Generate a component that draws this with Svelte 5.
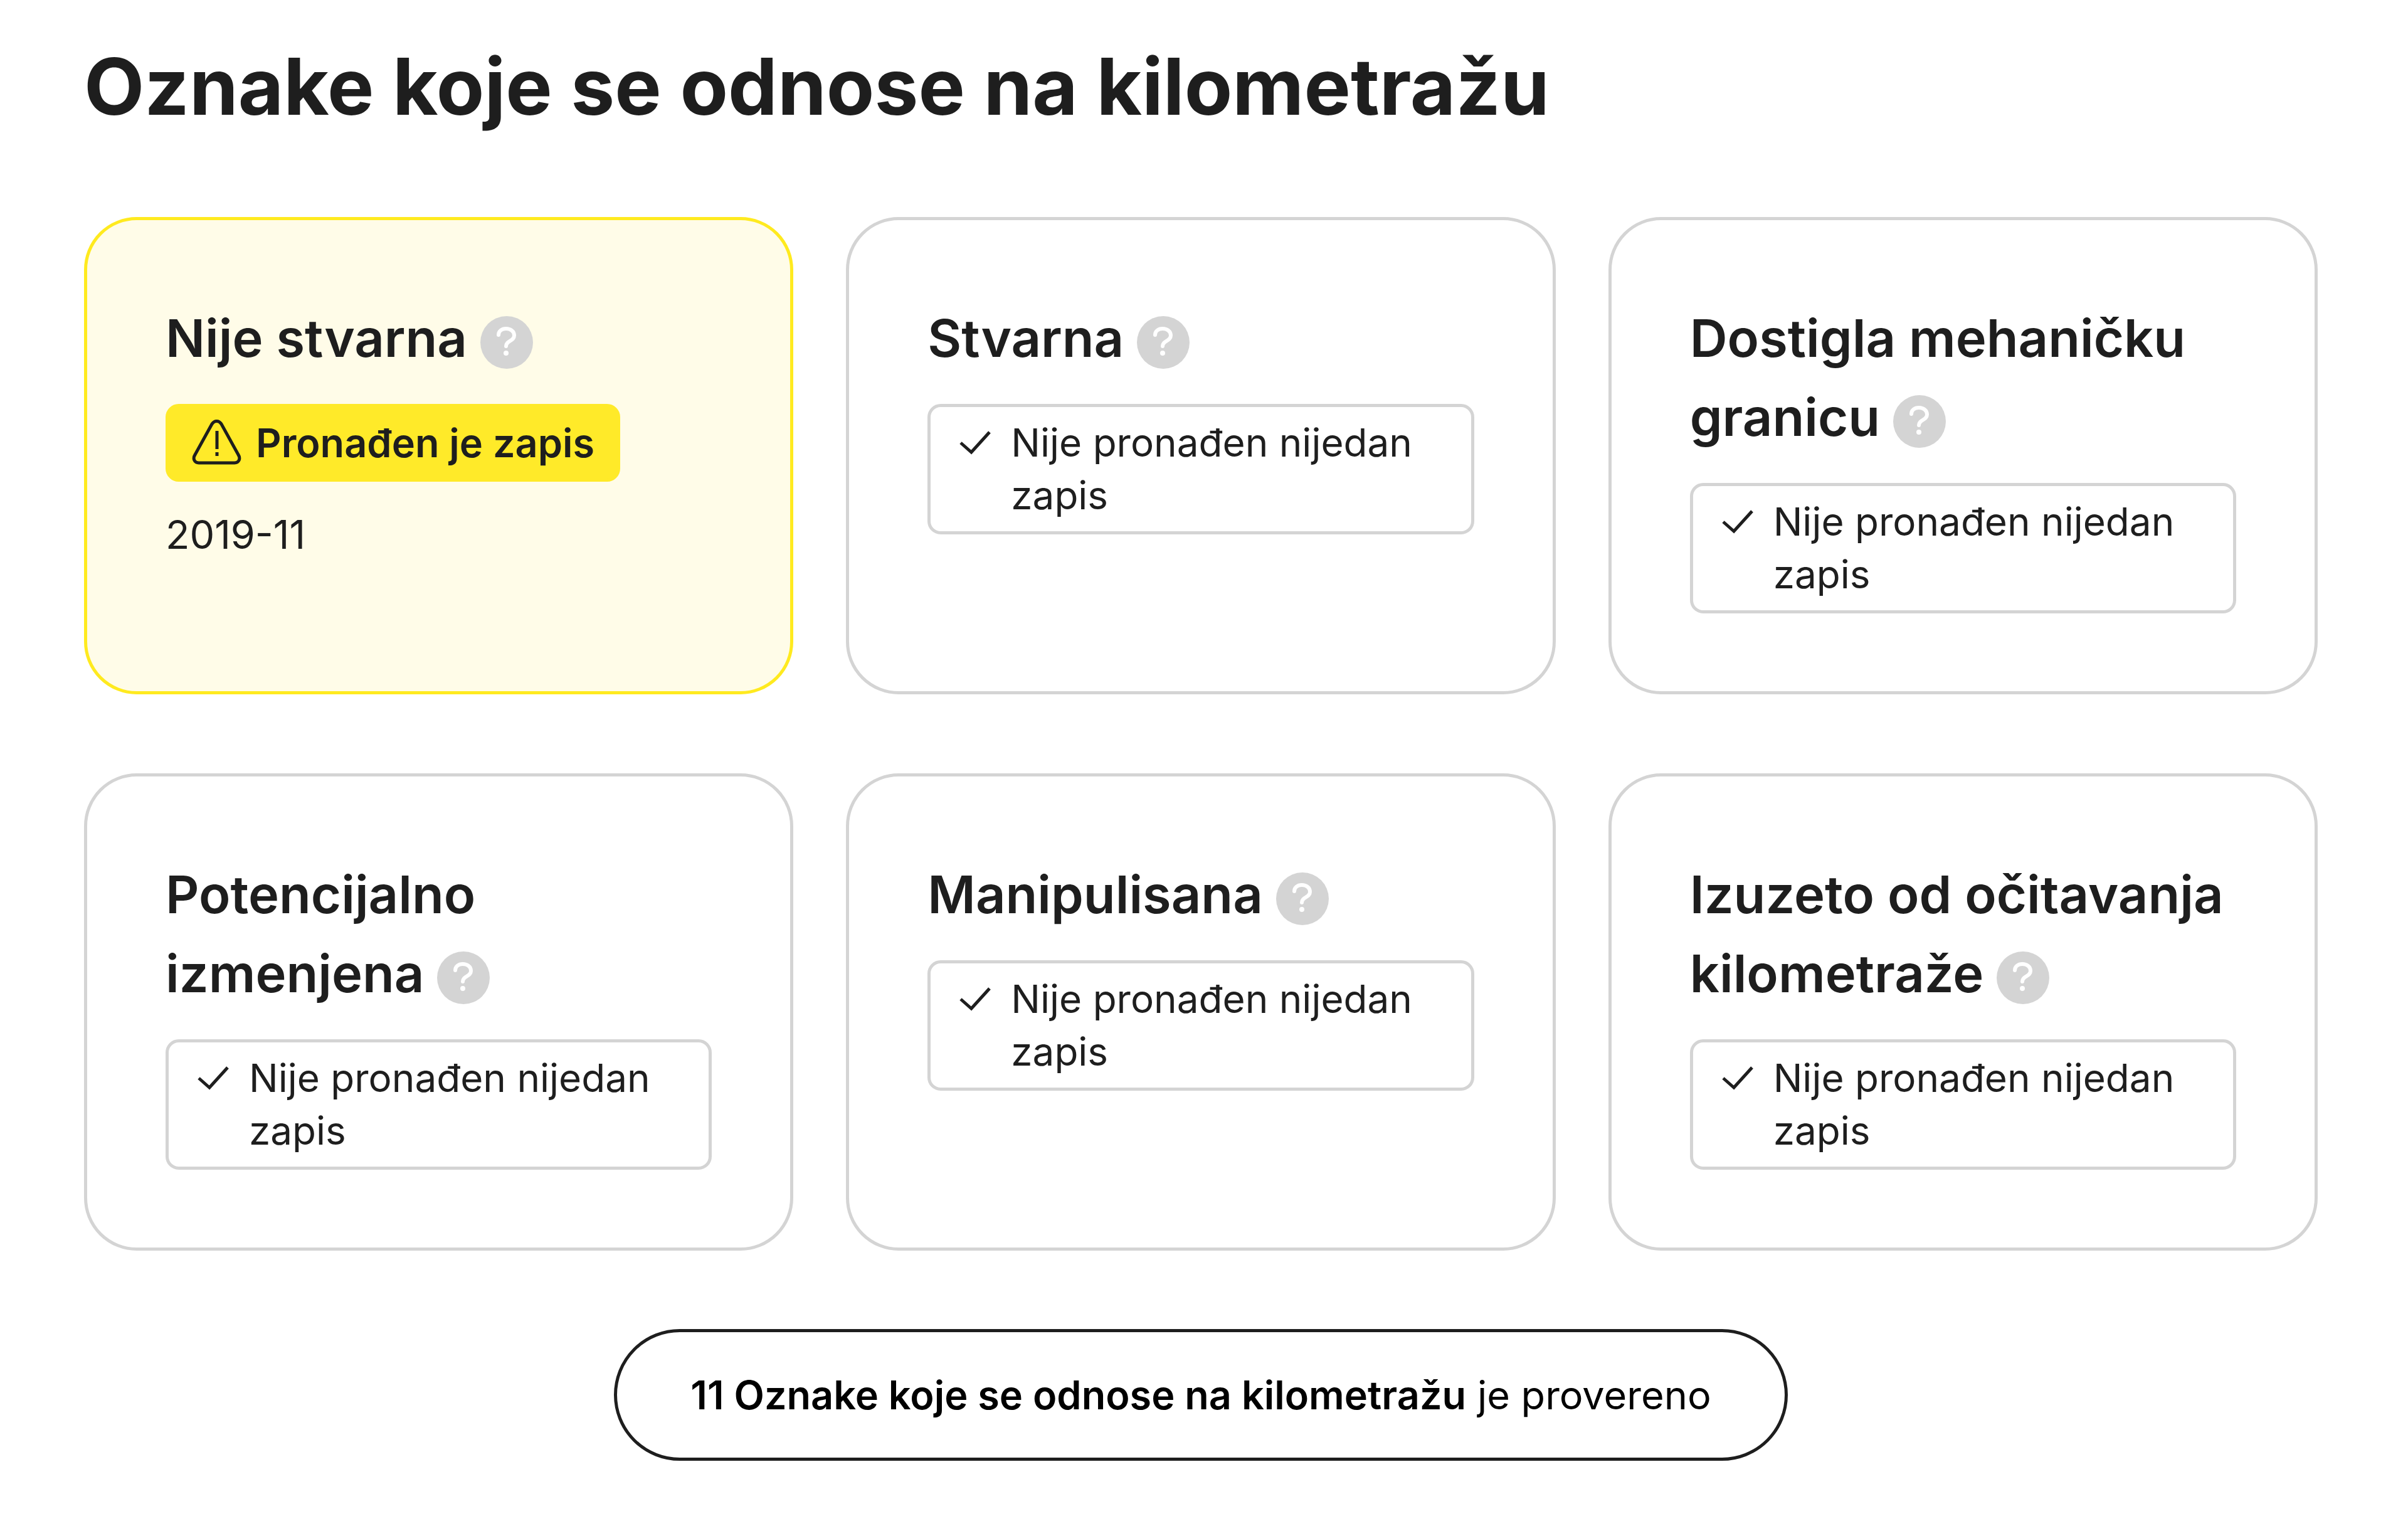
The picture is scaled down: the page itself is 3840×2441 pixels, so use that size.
<script>
  const marks = [
    { title: 'Nije stvarna', found: true, dates: ['2019-11'] },
    { title: 'Stvarna' },
    { title: 'Dostigla mehaničku granicu' },
    { title: 'Potencijalno izmenjena' },
    { title: 'Manipulisana' },
    { title: 'Izuzeto od očitavanja kilometraže' },
  ];
  const checked = 11;
</script>

<section>
  <h2>Oznake koje se odnose na kilometražu</h2>

  <div class="cards">
    {#each marks as mark}
      <article class="card" class:found={mark.found}>
        <h3>
          {mark.title}
          <button class="help" type="button" aria-label="Pomoć: {mark.title}">
            <svg viewBox="0 0 84 84" aria-hidden="true">
              <path d="M29 30C29 24 34 20 41 20C48 20 54 24 54 31C54 40 41 39 41 48" />
              <circle cx="41" cy="59" r="4" />
            </svg>
          </button>
        </h3>
        {#if mark.found}
          <div class="badge">
            <svg class="warning" viewBox="0 0 80 84" aria-hidden="true">
              <path d="M32 12L5 61C1 67 4 74 11 74H68C75 74 78 67 74 61L47 12C43 6 36 6 32 12Z" />
              <path d="M40 23V52M40 57V63" />
            </svg>
            <span>Pronađen je zapis</span>
          </div>
          {#each mark.dates as date}
            <p>{date}</p>
          {/each}
        {:else}
          <div class="badge">
            <svg class="check" viewBox="0 0 84 84" aria-hidden="true">
              <path d="M15 42L32 57L61 25" />
            </svg>
            <span>Nije pronađen nijedan zapis</span>
          </div>
        {/if}
      </article>
    {/each}
  </div>

  <div class="summary">
    <b>{checked} Oznake koje se odnose na kilometražu</b> je provereno
  </div>
</section>

<style>
  :global(body) {
    margin: 0;
    background: #fff;
  }
  section {
    display: flex;
    flex-direction: column;
    padding: 58px 144px 113px 134px;
    font-family: Inter, sans-serif;
    font-size: 63px;
    line-height: 84px;
    color: #1e1e1e;
  }
  h2 {
    margin: 0 0 128px;
    font-size: 125px;
    line-height: 160px;
    font-weight: 700;
  }
  .cards {
    display: grid;
    grid-template-columns: repeat(3, 1fr);
    gap: 126px 84px;
  }
  .card {
    padding: 125px 125px 124px;
    border: 5px solid #d4d4d4;
    border-radius: 84px;
  }
  .card.found {
    background: #fffce8;
    border-color: #ffea1f;
  }
  h3 {
    margin: 0 0 42px;
    font-size: 83px;
    line-height: 126px;
    font-weight: 600;
  }
  .help {
    width: 84px;
    height: 84px;
    padding: 0;
    border: none;
    border-radius: 50%;
    background: #d4d4d4;
    vertical-align: middle;
  }
  svg {
    display: block;
    flex: none;
    fill: none;
    stroke: currentColor;
    stroke-width: 5;
  }
  .help path {
    stroke: #fff;
    stroke-width: 6;
    stroke-linecap: round;
  }
  .help circle {
    fill: #fff;
    stroke: none;
  }
  .badge {
    display: flex;
    padding: 15px 42px 15px 33px;
    border: 5px solid #d4d4d4;
    border-radius: 21px;
    font-size: 62px;
  }
  .found .badge {
    width: fit-content;
    padding: 15px 36px 15px 37px;
    border-color: #ffea29;
    background: #ffea29;
    font-size: 63px;
    font-weight: 600;
  }
  .warning {
    width: 80px;
    height: 84px;
    margin-right: 22px;
  }
  .check {
    width: 84px;
    height: 84px;
    margin-right: 11px;
  }
  p {
    margin: 42px 0 0;
  }
  .summary {
    align-self: center;
    margin-top: 125px;
    padding: 58px 117px;
    border: 5px solid #1e1e1e;
    border-radius: 105px;
    color: #000;
  }
  b {
    font-weight: 600;
  }
</style>
